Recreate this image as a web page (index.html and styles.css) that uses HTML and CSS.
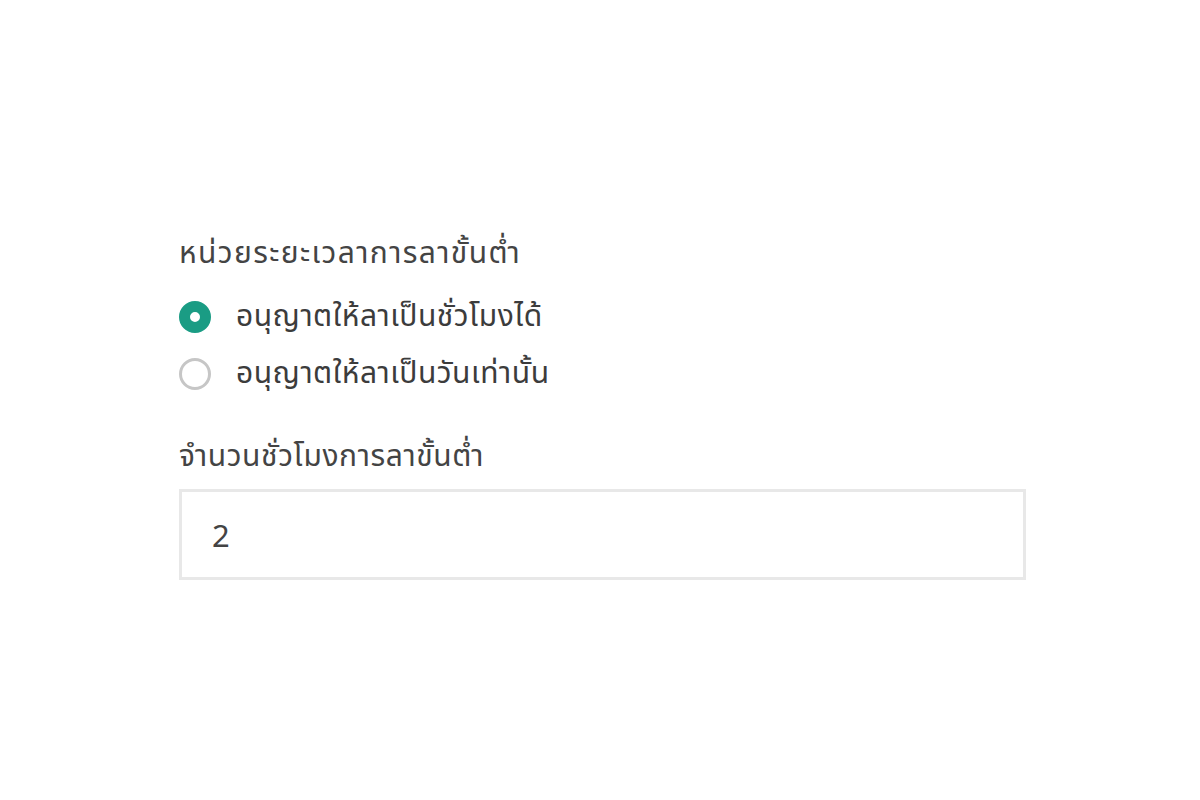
FILE: index.html
```html
<!DOCTYPE html>
<html lang="th">
<head>
<meta charset="utf-8">
<link rel="stylesheet" href="styles.css">
</head>
<body>
<div class="page">
  <form class="form">
    <div class="field">
      <div class="field-label wide">หน่วยระยะเวลาการลาขั้นต่ำ</div>
      <div class="radio-group">
        <label class="radio">
          <span class="radio-dot checked"></span>
          <span class="radio-text">อนุญาตให้ลาเป็นชั่วโมงได้</span>
        </label>
        <label class="radio">
          <span class="radio-dot"></span>
          <span class="radio-text">อนุญาตให้ลาเป็นวันเท่านั้น</span>
        </label>
      </div>
    </div>
    <div class="field">
      <div class="field-label">จำนวนชั่วโมงการลาขั้นต่ำ</div>
      <div class="input">2</div>
    </div>
  </form>
</div>
</body>
</html>
```
FILE: styles.css
```css
html, body {
  margin: 0;
  padding: 0;
  background: #ffffff;
}
body {
  font-family: "Noto Sans Thai", "Noto Sans", "DejaVu Sans", sans-serif;
  color: #3c3c3c;
}
.page {
  width: 1200px;
  height: 800px;
  padding: 232px 0 0 179px;
  box-sizing: border-box;
}
.form {
  width: 847px;
  display: flex;
  flex-direction: column;
  gap: 41px;
}
.field {
  display: flex;
  flex-direction: column;
}
.field-label {
  font-size: 30px;
  line-height: 44px;
  letter-spacing: 0.6px;
  color: #444;
}
.field-label.wide {
  letter-spacing: 1.4px;
}
.radio-group {
  display: flex;
  flex-direction: column;
  gap: 17px;
  margin-top: 21px;
}
.radio {
  display: flex;
  align-items: center;
  gap: 25px;
  height: 40px;
}
.radio-dot {
  width: 32px;
  height: 32px;
  box-sizing: border-box;
  border-radius: 50%;
  border: 3px solid #c6c6c6;
  flex: none;
}
.radio-dot.checked {
  border: 11px solid #1a9c84;
  background: #fff;
}
.radio-text {
  font-size: 30px;
  letter-spacing: 0.5px;
  color: #3c3c3c;
}
.input {
  margin-top: 10px;
  height: 91px;
  box-sizing: border-box;
  border: 3px solid #e8e8e8;
  padding: 5px 30px 0;
  display: flex;
  align-items: center;
  font-size: 31px;
  color: #444;
}
```
